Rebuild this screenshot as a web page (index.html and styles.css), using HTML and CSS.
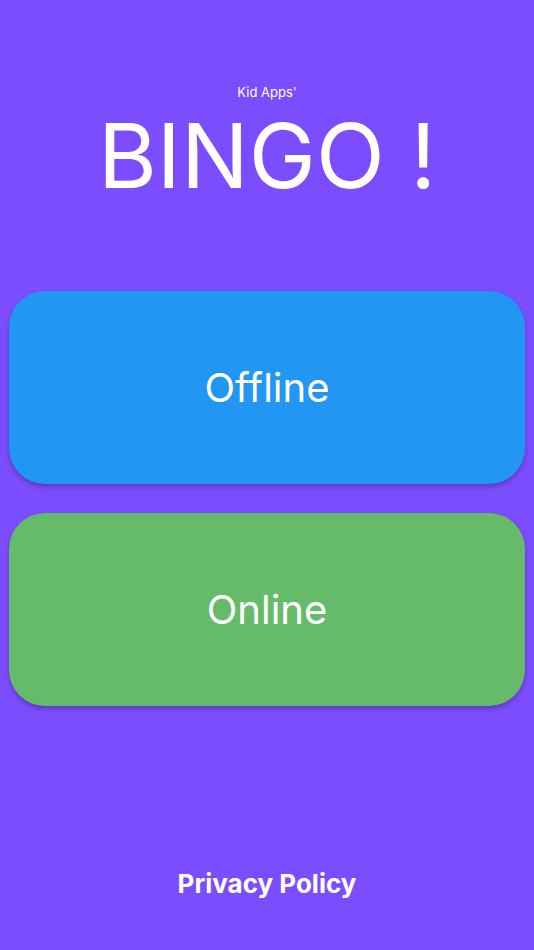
FILE: index.html
```html
<!DOCTYPE html>
<html lang="en">
<head>
    <meta charset="UTF-8">
    <meta name="viewport" content="width=device-width, initial-scale=1.0">
    <title>Kid Apps' BINGO !</title>
    <link rel="stylesheet" href="styles.css">
</head>
<body>
    <div class="app">
        <div class="header">
            <div class="subtitle">Kid Apps'</div>
            <h1 class="title">BINGO !</h1>
        </div>

        <div class="menu">
            <button class="mode-btn offline">Offline</button>
            <button class="mode-btn online">Online</button>
        </div>

        <div class="footer">
            <a class="privacy" href="#">Privacy Policy</a>
        </div>
    </div>
</body>
</html>
```

FILE: styles.css
```css
body {
    margin: 0;
    background-color: #7c4dff;
    font-family: Inter, Roboto, sans-serif;
    color: white;
}
.app {
    display: flex;
    flex-direction: column;
    height: 950px;
}
.header {
    display: flex;
    flex-direction: column;
    align-items: center;
    padding-top: 83px;
}
.subtitle {
    font-size: 13px;
    line-height: 18px;
}
.title {
    margin: 0;
    font-size: 90px;
    font-weight: 400;
    line-height: 110px;
}
.menu {
    display: flex;
    flex-direction: column;
    gap: 29px;
    padding: 80px 9px 0;
}
.mode-btn {
    height: 193px;
    border: none;
    border-radius: 36px;
    color: white;
    font-family: Inter, Roboto, sans-serif;
    font-size: 40px;
    cursor: pointer;
    box-shadow: 0 3px 5px rgba(0,0,0,0.25);
}
.offline {
    background-color: #2196f3;
}
.online {
    background-color: #66bb6a;
}
.footer {
    margin-top: auto;
    padding-bottom: 51px;
    text-align: center;
}
.privacy {
    color: white;
    text-decoration: none;
    font-size: 26px;
    font-weight: 700;
}
```
